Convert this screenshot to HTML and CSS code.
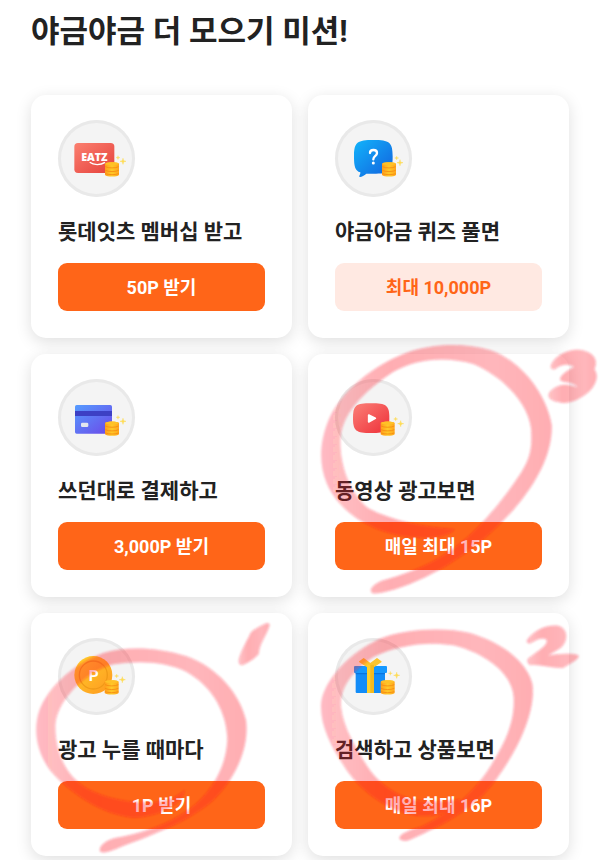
FILE: index.html
```html
<!DOCTYPE html>
<html lang="ko">

<head>
    <meta charset="UTF-8">
    <meta name="viewport" content="width=device-width, initial-scale=1.0">
    <link rel="stylesheet" href="styles.css">
    <title>야금야금 더 모으기 미션!</title>
</head>

<body>
    <!-- shared gradients, coin stack and sparkle -->
    <svg class="defs" aria-hidden="true">
        <defs>
            <linearGradient id="red" x1="0" y1="0" x2="1" y2="1">
                <stop offset="0" stop-color="#fb8070" />
                <stop offset="1" stop-color="#e5403b" />
            </linearGradient>
            <linearGradient id="blue" x1="0" y1="0" x2="1" y2="1">
                <stop offset="0" stop-color="#12b4fb" />
                <stop offset="1" stop-color="#1260dd" />
            </linearGradient>
            <linearGradient id="card" x1="0" y1="0" x2="1" y2="1">
                <stop offset="0" stop-color="#559cff" />
                <stop offset="1" stop-color="#6d47e8" />
            </linearGradient>
            <linearGradient id="play" x1="0" y1="0" x2="1" y2="1">
                <stop offset="0" stop-color="#fb8078" />
                <stop offset="1" stop-color="#ee2f38" />
            </linearGradient>
            <linearGradient id="gold" x1="0" y1="0" x2="1" y2="1">
                <stop offset="0" stop-color="#ffd02b" />
                <stop offset="1" stop-color="#ff9820" />
            </linearGradient>
            <linearGradient id="coin" x1="0" y1="0" x2="1" y2="0">
                <stop offset="0" stop-color="#ff9d1c" />
                <stop offset="0.5" stop-color="#ffc928" />
                <stop offset="1" stop-color="#ffa51c" />
            </linearGradient>
            <linearGradient id="marker" x1="0" y1="0" x2="1" y2="0">
                <stop offset="0" stop-color="#ff1428" stop-opacity="0.27" />
                <stop offset="0.3" stop-color="#ff1428" stop-opacity="0.36" />
                <stop offset="0.75" stop-color="#ff1428" stop-opacity="0.32" />
                <stop offset="1" stop-color="#ff1428" stop-opacity="0.36" />
            </linearGradient>
            <filter id="soft" x="-10%" y="-10%" width="120%" height="120%">
                <feGaussianBlur stdDeviation="3" />
            </filter>
            <symbol id="coins" viewBox="0 0 42 44" overflow="visible">
                <path d="M0 5C6-1 36-1 42 5V39C36 45 6 45 0 39Z" fill="url(#coin)" />
                <path d="M1 14C10 19 32 19 41 14M1 25C10 30 32 30 41 25M1 35C10 39 32 39 41 35" fill="none" stroke="#f58a12" stroke-width="2.5" />
                <ellipse cx="21" cy="5" rx="20" ry="4.5" fill="#ffc127" />
            </symbol>
            <path id="spark" d="M0-9C1-2 2-1 9 0C2 1 1 2 0 9C-1 2-2 1-9 0C-2-1-1-2 0-9Z" fill="#ffdc55" stroke="#ffdc55" stroke-width="1.5" />
        </defs>
    </svg>

    <main class="page">
        <h1 class="page-title">야금야금 더 모으기 미션!</h1>

        <div class="missions">
            <section class="mission">
                <svg class="icon" viewBox="24 30 231 231" aria-hidden="true">
                    <rect x="73" y="99" width="120" height="90" rx="11" fill="url(#red)" />
                    <text class="eatz" x="133" y="153">EATZ</text>
                    <path d="M119 157C131 166 152 166 165 157" fill="none" stroke="#fff" stroke-width="4" />
                    <use href="#coins" x="165" y="156" width="42" height="44" />
                    <use href="#spark" transform="translate(204 143) scale(.65)" />
                    <use href="#spark" transform="translate(219 154)" />
                </svg>
                <h2 class="mission-title">롯데잇츠 멤버십 받고</h2>
                <button type="button" class="btn">50P 받기</button>
            </section>

            <section class="mission">
                <svg class="icon" viewBox="24 30 231 231" aria-hidden="true">
                    <path d="M139 90C187 90 197 96 197 140C197 184 187 191 139 191L118 191C111 197 103 202 98 201C94 199 101 194 100 187C84 182 81 168 81 140C81 96 91 90 139 90Z" fill="url(#blue)" />
                    <path d="M129 129C129 117 150 117 150 129C150 138 139 137 139 148" fill="none" stroke="#fff" stroke-width="7" stroke-linecap="round" />
                    <circle cx="139" cy="159" r="4.5" fill="#fff" />
                    <use href="#coins" x="165" y="156" width="42" height="44" />
                    <use href="#spark" transform="translate(209 144) scale(.65)" />
                    <use href="#spark" transform="translate(219 158)" />
                </svg>
                <h2 class="mission-title">야금야금 퀴즈 풀면</h2>
                <button type="button" class="btn btn-light">최대 10,000P</button>
            </section>

            <section class="mission">
                <svg class="icon" viewBox="24 24 231 231" aria-hidden="true">
                    <rect x="75" y="102" width="111" height="86" rx="5" fill="url(#card)" />
                    <path d="M75 120H186V135H75Z" fill="#3d40c4" />
                    <rect x="93" y="155" width="22" height="13" rx="4" fill="#e3e7ee" />
                    <use href="#coins" x="165" y="151" width="42" height="44" />
                    <use href="#spark" transform="translate(204 139) scale(.65)" />
                    <use href="#spark" transform="translate(219 151)" />
                </svg>
                <h2 class="mission-title">쓰던대로 결제하고</h2>
                <button type="button" class="btn">3,000P 받기</button>
            </section>

            <section class="mission">
                <svg class="icon" viewBox="24 24 231 231" aria-hidden="true">
                    <path d="M132 97C178 97 187 103 187 141C187 180 178 186 132 186C87 186 78 180 78 141C78 103 87 97 132 97Z" fill="url(#play)" />
                    <path d="M125 132V153L145 142Z" fill="#fff" stroke="#fff" stroke-width="5" stroke-linejoin="round" />
                    <use href="#coins" x="161" y="151" width="42" height="44" />
                    <use href="#spark" transform="translate(206 144) scale(.65)" />
                    <use href="#spark" transform="translate(221 158)" />
                </svg>
                <h2 class="mission-title">동영상 광고보면</h2>
                <button type="button" class="btn">매일 최대 15P</button>
                <svg class="mark" viewBox="24 42 783 729" aria-hidden="true">
                    <path d="M465 568C440 598 350 602 270 580C180 555 110 500 80 430C55 370 58 300 90 230C130 150 220 75 320 38C400 10 490 8 570 30C660 60 740 160 755 255C758 340 710 430 640 510C560 600 450 685 330 732C290 748 240 762 218 760C205 752 215 735 245 722C300 708 370 685 440 640C530 580 610 480 665 395C692 350 697 320 693 265C685 190 610 110 520 72C440 48 350 55 280 95C190 155 125 220 121 300C120 380 150 460 205 505C280 545 380 562 465 568Z" />
                    <path d="M752 78C760 50 800 28 835 29C880 32 897 60 883 88C900 110 885 145 855 165C830 182 800 195 775 186C745 182 738 165 752 152C775 132 800 130 832 142C825 128 800 128 782 122C775 112 790 98 822 80C805 70 780 72 765 88C758 90 750 86 752 78Z" />
                </svg>
            </section>

            <section class="mission">
                <svg class="icon" viewBox="24 27 231 231" aria-hidden="true">
                    <circle cx="130" cy="138" r="57" fill="url(#gold)" />
                    <circle cx="130" cy="138" r="42" fill="none" stroke="#f09a18" stroke-width="4" />
                    <text class="point" x="131" y="155">P</text>
                    <use href="#coins" x="164" y="153" width="42" height="44" />
                    <use href="#spark" transform="translate(200 141) scale(.65)" />
                    <use href="#spark" transform="translate(217 152)" />
                </svg>
                <h2 class="mission-title">광고 누를 때마다</h2>
                <button type="button" class="btn">1P 받기</button>
                <svg class="mark" viewBox="93 38 783 729" aria-hidden="true">
                    <path d="M555 568C550 610 480 650 400 652C310 645 210 580 150 510C110 455 98 390 118 330C145 260 220 190 310 158C380 138 470 140 560 168C650 200 720 280 738 360C748 440 710 530 640 600C560 670 440 710 350 745C325 755 305 760 300 753C295 740 315 720 345 713C420 700 500 675 570 625C635 575 680 500 682 415C680 340 640 260 560 215C500 185 420 180 340 192C260 212 170 300 166 375C165 460 200 530 265 567C340 605 440 615 500 598C530 590 545 575 555 568Z" />
                    <path d="M795 70C806 67 811 70 808 78C800 105 776 135 777 160C765 175 740 190 725 195C713 193 714 180 720 165C728 140 745 115 752 97C765 84 780 78 795 70Z" />
                </svg>
            </section>

            <section class="mission">
                <svg class="icon" viewBox="24 27 231 231" aria-hidden="true">
                    <rect x="86" y="128" width="88" height="64" rx="3" fill="#128cf8" />
                    <rect x="81" y="111" width="99" height="21" rx="3" fill="#1598ff" />
                    <path d="M86 132H174V136H86Z" fill="#0874df" />
                    <path d="M120 112L98 98L110 89L130 104L150 89L162 98L141 112Z" fill="#fcc42e" stroke="#fcc42e" stroke-width="4" stroke-linejoin="round" />
                    <path d="M120 107H141V192H120Z" fill="#fdd02d" />
                    <path d="M130 107H141V192H130Z" fill="#f5b91d" />
                    <use href="#coins" x="161" y="153" width="42" height="44" />
                    <use href="#spark" transform="translate(190 133) scale(.65)" />
                    <use href="#spark" transform="translate(209 139)" />
                </svg>
                <h2 class="mission-title">검색하고 상품보면</h2>
                <button type="button" class="btn">매일 최대 16P</button>
                <svg class="mark" viewBox="24 38 783 729" aria-hidden="true">
                    <path d="M480 595C480 630 420 652 350 646C270 635 190 580 140 510C95 440 60 380 63 310C70 240 150 155 240 115C320 85 430 80 510 98C600 125 680 180 697 250C708 330 660 440 590 535C530 620 440 670 330 718C315 724 300 722 298 714C298 702 325 690 360 680C440 645 520 580 570 500C620 420 645 360 641 290C636 220 560 160 460 135C380 122 290 135 220 170C150 215 118 270 123 320C130 380 165 440 200 495C240 560 310 600 380 603C420 605 460 600 480 595Z" />
                    <path d="M680 120C700 90 740 72 775 76C805 85 805 120 785 140C770 152 755 158 745 166C775 160 815 158 835 165C842 175 810 190 790 203C755 205 720 190 690 195C678 185 680 175 690 170C715 150 745 135 740 118C725 108 705 122 690 130C682 130 678 126 680 120Z" />
                </svg>
            </section>
        </div>
    </main>
</body>

</html>
```

FILE: styles.css
```css
* {
    box-sizing: border-box;
}

body {
    margin: 0;
    background-color: white;
    color: #222;
    font-family: Roboto, "Noto Sans CJK KR", sans-serif;
    overflow-x: hidden;
}

.defs {
    position: absolute;
    width: 0;
    height: 0;
}

.page {
    padding: 12px 31px 4px;
}

.page-title {
    margin: 0 0 43px;
    font-size: 31px;
    line-height: 40px;
    font-weight: 700;
}

.missions {
    display: grid;
    grid-template-columns: 1fr 1fr;
    gap: 16px;
}

.mission {
    position: relative;
    display: flex;
    flex-direction: column;
    padding: 25px 27px 27px;
    border-radius: 15px;
    background-color: white;
    box-shadow: 0 4px 16px rgba(0, 0, 0, 0.13);
}

.icon {
    width: 77px;
    height: 77px;
    border-radius: 50%;
    background-color: #f4f4f4;
    box-shadow: inset 0 0 0 3px #e9e9e9;
}

.eatz, .point {
    fill: white;
    font-family: "Open Sans", sans-serif;
    font-weight: 800;
    text-anchor: middle;
}

.eatz {
    font-size: 32px;
}

.point {
    font-family: Roboto, sans-serif;
    font-size: 46px;
    font-weight: 700;
}

.mission-title {
    margin: 20px 0 16px;
    font-size: 21px;
    line-height: 30px;
    font-weight: 700;
}

.btn {
    height: 48px;
    padding: 0 0 2px;
    border: none;
    border-radius: 9px;
    background-color: #ff6518;
    color: white;
    font-family: inherit;
    font-size: 18px;
    font-weight: 700;
    cursor: pointer;
}

.btn-light {
    background-color: #ffe9e2;
    color: #ff6518;
}

/* highlighter strokes drawn over the card */
.mark {
    position: absolute;
    top: 0;
    left: 0;
    z-index: 1;
    width: 100%;
    height: 100%;
    overflow: visible;
    fill: url(#marker);
    pointer-events: none;
}

.mark path {
    filter: url(#soft);
}
```
